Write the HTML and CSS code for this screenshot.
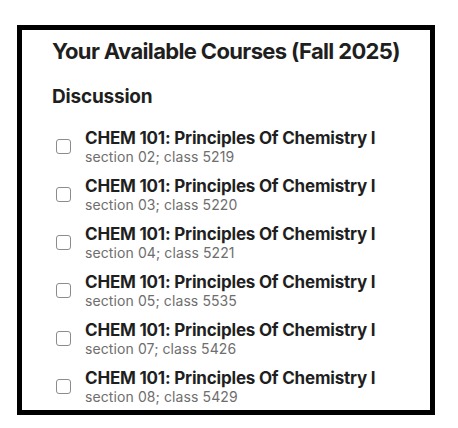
FILE: index.html
```html
<!DOCTYPE html>
<html lang="en">
<head>
<meta charset="utf-8">
<title>Your Available Courses</title>
<link rel="stylesheet" href="styles.css">
</head>
<body>
<div class="frame">
  <h1 class="title">Your Available Courses (Fall 2025)</h1>
  <h2 class="group">Discussion</h2>
  <ul class="courses">
    <li class="course"><label class="row"><input type="checkbox" class="box"><span class="text"><span class="name">CHEM 101: Principles Of Chemistry I</span><span class="meta">section 02; class 5219</span></span></label></li>
    <li class="course"><label class="row"><input type="checkbox" class="box"><span class="text"><span class="name">CHEM 101: Principles Of Chemistry I</span><span class="meta">section 03; class 5220</span></span></label></li>
    <li class="course"><label class="row"><input type="checkbox" class="box"><span class="text"><span class="name">CHEM 101: Principles Of Chemistry I</span><span class="meta">section 04; class 5221</span></span></label></li>
    <li class="course"><label class="row"><input type="checkbox" class="box"><span class="text"><span class="name">CHEM 101: Principles Of Chemistry I</span><span class="meta">section 05; class 5535</span></span></label></li>
    <li class="course"><label class="row"><input type="checkbox" class="box"><span class="text"><span class="name">CHEM 101: Principles Of Chemistry I</span><span class="meta">section 07; class 5426</span></span></label></li>
    <li class="course"><label class="row"><input type="checkbox" class="box"><span class="text"><span class="name">CHEM 101: Principles Of Chemistry I</span><span class="meta">section 08; class 5429</span></span></label></li>
  </ul>
</div>
</body>
</html>
```
FILE: styles.css
```css
html, body {
  margin: 0;
  padding: 0;
  background: #fff;
}
body {
  font-family: Inter, "Liberation Sans", sans-serif;
  color: #1f1f1f;
}
.frame {
  box-sizing: border-box;
  width: 418px;
  height: 390px;
  margin: 25px 0 0 17px;
  border: 5px solid #000;
  padding: 8px 0 0 30px;
  overflow: hidden;
}
.title {
  margin: 0;
  font-size: 22px;
  line-height: 26px;
  font-weight: 700;
  letter-spacing: -0.65px;
}
.group {
  margin: 22px 0 0;
  font-size: 19px;
  line-height: 22px;
  font-weight: 700;
  letter-spacing: -0.2px;
}
.courses {
  list-style: none;
  margin: 20px 0 0;
  padding: 0;
  display: flex;
  flex-direction: column;
  gap: 11px;
}
.row {
  display: flex;
  align-items: center;
  gap: 14px;
}
.box {
  appearance: none;
  -webkit-appearance: none;
  margin: -1px 0 0 4px;
  width: 15px;
  height: 15px;
  border: 1px solid #8c8c8c;
  border-radius: 3px;
  background: #fff;
  flex: none;
}
.text {
  display: flex;
  flex-direction: column;
}
.name {
  font-size: 17px;
  line-height: 20px;
  font-weight: 700;
  letter-spacing: -0.2px;
}
.meta {
  font-size: 14px;
  line-height: 17px;
  color: #6e6e6e;
  letter-spacing: 0.1px;
}
```
